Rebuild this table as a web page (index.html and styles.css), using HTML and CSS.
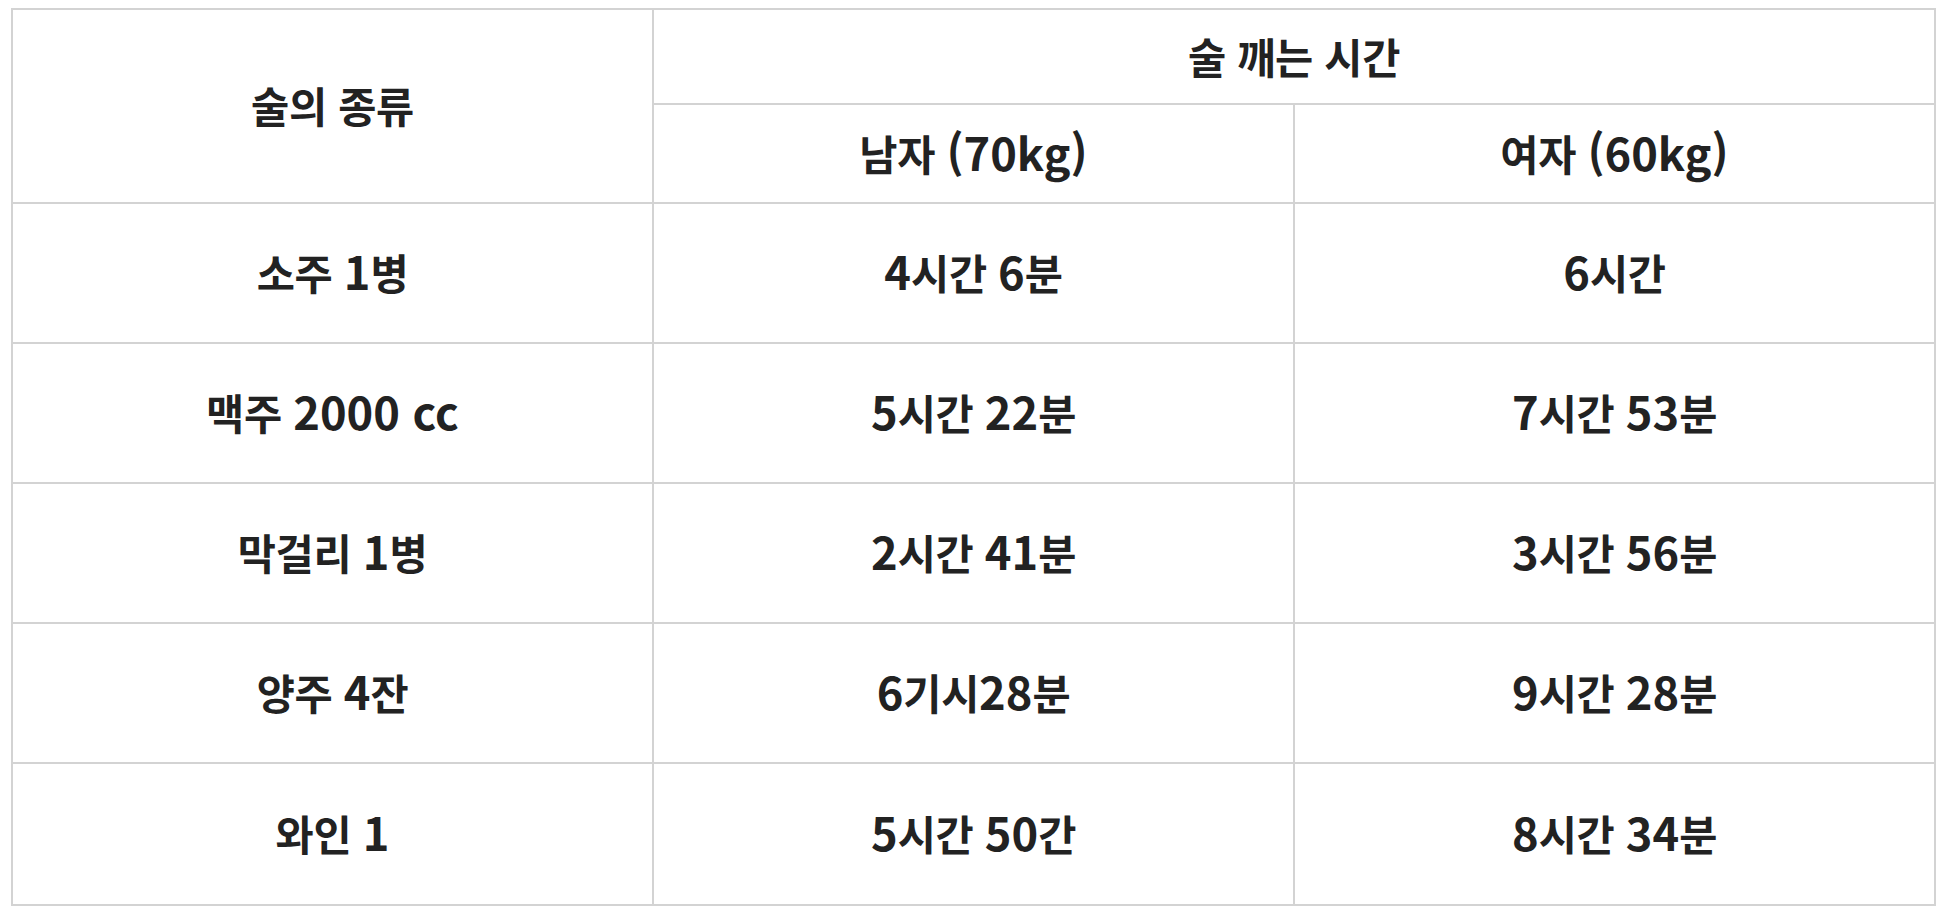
FILE: index.html
```html
<!DOCTYPE html>
<html lang="ko">
<head>
<meta charset="utf-8">
<title>술 깨는 시간</title>
<link rel="stylesheet" href="styles.css">
</head>
<body>
<table class="drink-table">
  <colgroup>
    <col class="col">
    <col class="col">
    <col class="col">
  </colgroup>
  <thead>
    <tr class="head-top">
      <th rowspan="2">술의 종류</th>
      <th colspan="2">술 깨는 시간</th>
    </tr>
    <tr class="head-sub">
      <th>남자 <span class="lat">(70kg)</span></th>
      <th>여자 <span class="lat">(60kg)</span></th>
    </tr>
  </thead>
  <tbody>
    <tr><td>소주 <span class="lat">1</span>병</td><td><span class="lat">4</span>시간 <span class="lat">6</span>분</td><td><span class="lat">6</span>시간</td></tr>
    <tr><td>맥주 <span class="lat">2000 cc</span></td><td><span class="lat">5</span>시간 <span class="lat">22</span>분</td><td><span class="lat">7</span>시간 <span class="lat">53</span>분</td></tr>
    <tr><td>막걸리 <span class="lat">1</span>병</td><td><span class="lat">2</span>시간 <span class="lat">41</span>분</td><td><span class="lat">3</span>시간 <span class="lat">56</span>분</td></tr>
    <tr><td>양주 <span class="lat">4</span>잔</td><td><span class="lat">6</span>기시<span class="lat">28</span>분</td><td><span class="lat">9</span>시간 <span class="lat">28</span>분</td></tr>
    <tr class="last"><td>와인 <span class="lat">1</span></td><td><span class="lat">5</span>시간 <span class="lat">50</span>간</td><td><span class="lat">8</span>시간 <span class="lat">34</span>분</td></tr>
  </tbody>
</table>
</body>
</html>
```

FILE: styles.css
```css
html, body {
  background: #ffffff;
}
body {
  margin: 8px 0 0 11px;
  font-family: "Noto Sans CJK KR", "Noto Sans", sans-serif;
  color: #222222;
}
.drink-table {
  width: 1925px;
  border-collapse: collapse;
  table-layout: fixed;
  border: 2px solid #d3d3d3;
}
.drink-table th,
.drink-table td {
  border: 2px solid #d3d3d3;
  padding: 0;
  text-align: center;
  vertical-align: middle;
  font-size: 41.5px;
  font-weight: 700;
  line-height: 1.2;
  letter-spacing: -0.3px;
}
.lat {
  font-size: 1.09em;
  line-height: 1;
  letter-spacing: 0;
}
.head-top th {
  height: 93px;
}
.head-sub th {
  height: 97px;
}
.drink-table tbody td {
  height: 138px;
}
.drink-table tbody tr.last td {
  height: 140px;
}
```
